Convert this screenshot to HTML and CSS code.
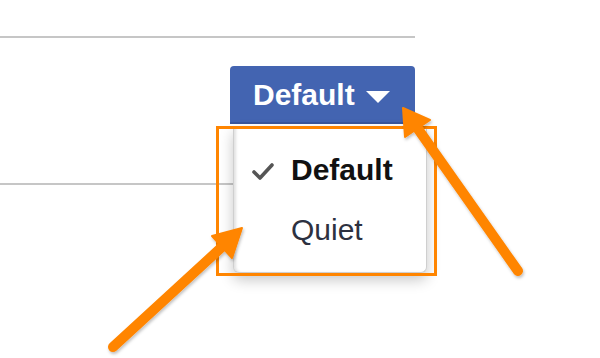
FILE: index.html
```html
<!DOCTYPE html>
<html>
<head>
<meta charset="utf-8">
<link rel="stylesheet" href="styles.css">
</head>
<body>
<div class="page">
  <div class="rule rule-top"></div>
  <div class="toolbar">
    <div class="dropdown">
      <button class="btn">Default<span class="caret"></span></button>
      <div class="menu">
        <div class="item selected">
          <svg class="check" viewBox="0 0 22 18" width="22" height="18"><path d="M2 10 L8 16 L20 3" fill="none" stroke="#555" stroke-width="3.6" stroke-linecap="round" stroke-linejoin="round"/></svg>
          Default
        </div>
        <div class="item">Quiet</div>
      </div>
    </div>
  </div>
  <div class="rule rule-mid"></div>
  <svg class="annot" width="600" height="358" viewBox="0 0 600 358">
    <defs>
      <filter id="sh" x="-20%" y="-20%" width="140%" height="140%">
        <feDropShadow dx="1" dy="2" stdDeviation="1.5" flood-color="#000" flood-opacity="0.25"/>
      </filter>
    </defs>
    <rect x="217.5" y="127.5" width="218" height="147" fill="none" stroke="#ff8500" stroke-width="3"/>
    <g fill="#ff8500" stroke="#ff8500" filter="url(#sh)">
      <line x1="518" y1="271" x2="418" y2="129" stroke-width="10" stroke-linecap="round"/>
      <polygon points="403,108 430,120 405,137" stroke-width="2" stroke-linejoin="round"/>
      <line x1="113" y1="347" x2="223" y2="246" stroke-width="10" stroke-linecap="round"/>
      <polygon points="242,228 232,258 212,236" stroke-width="2" stroke-linejoin="round"/>
    </g>
  </svg>
</div>
</body>
</html>
```

FILE: styles.css
```css
html, body {
  margin: 0;
  padding: 0;
  background: #fff;
}
.page {
  position: relative;
  width: 600px;
  height: 358px;
  overflow: hidden;
  font-family: "Liberation Sans", Arial, sans-serif;
}
.rule {
  width: 415px;
  height: 2px;
  background: #c6c6c6;
}
.rule-top {
  margin-top: 36px;
}
.rule-mid {
  margin-top: 59px;
}
.toolbar {
  width: 415px;
  margin-top: 28px;
  display: flex;
  justify-content: flex-end;
  position: relative;
  z-index: 2;
}
.dropdown {
  position: relative;
}
.btn {
  box-sizing: border-box;
  width: 185px;
  display: flex;
  align-items: center;
  gap: 11px;
  height: 58px;
  padding: 0 0 0 23px;
  border: 0;
  border-radius: 4px 4px 0 0;
  background: #4364b1;
  color: #fff;
  font-family: "Liberation Sans", Arial, sans-serif;
  font-weight: bold;
  font-size: 30px;
  box-shadow: inset 0 -2px 0 #3a579c;
}
.caret {
  width: 0;
  height: 0;
  border-left: 12.5px solid transparent;
  border-right: 12.5px solid transparent;
  border-top: 12px solid #fff;
  margin-top: 3px;
}
.menu {
  position: absolute;
  top: 60px;
  left: 3px;
  width: 192px;
  padding: 14px 0 12px;
  background: #fff;
  border: 1px solid #cfcfcf;
  border-top: 0;
  border-radius: 0 0 6px 6px;
  box-shadow: inset 3px 0 3px -1px rgba(0,0,0,0.12), 0 7px 14px rgba(0,0,0,0.22);
}
.item {
  position: relative;
  height: 60px;
  line-height: 60px;
  padding-left: 57px;
  font-size: 30px;
  color: #2d3140;
}
.item.selected {
  font-weight: bold;
  color: #111;
}
.check {
  position: absolute;
  left: 18px;
  top: 22px;
}
.annot {
  position: absolute;
  left: 0;
  top: 0;
  z-index: 3;
  pointer-events: none;
}
```
